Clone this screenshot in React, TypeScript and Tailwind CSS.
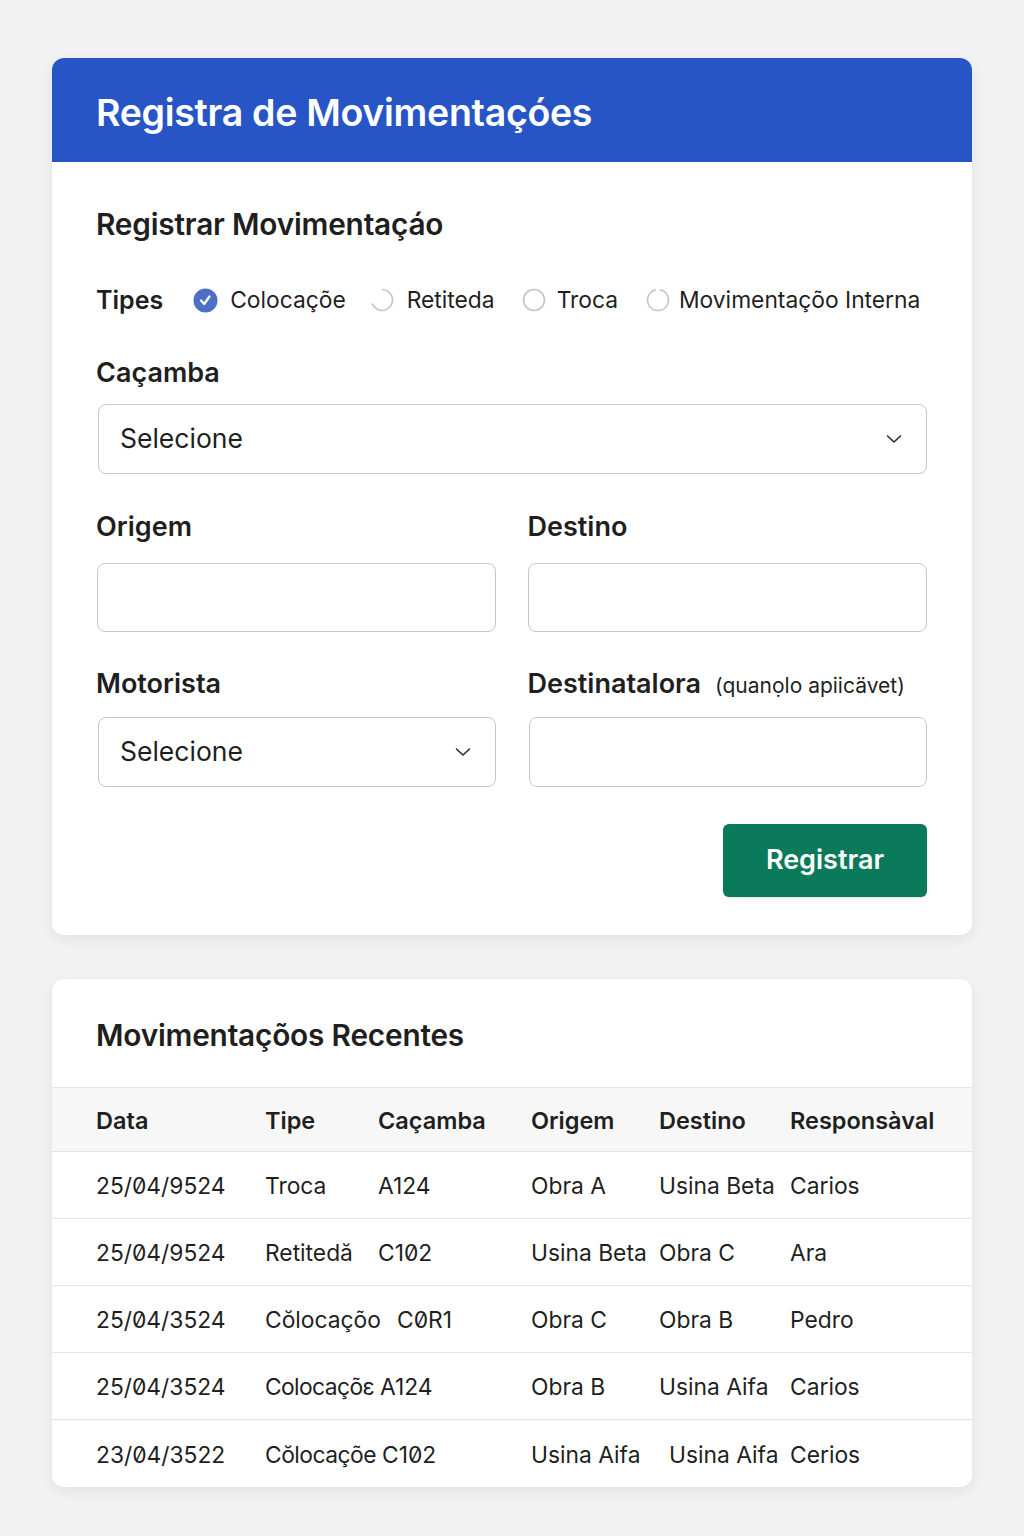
import React from "react";

const rows = [
  { data: "25/04/9524", tipe: "Troca", cacamba: "A124", origem: "Obra A", destino: "Usina Beta", resp: "Carios", tx: "", cx: "", dx: "" },
  { data: "25/04/9524", tipe: "Retitedă", cacamba: "C102", origem: "Usina Beta", destino: "Obra C", resp: "Ara", tx: "", cx: "", dx: "" },
  { data: "25/04/3524", tipe: "Cŏlocaçõo", cacamba: "C0R1", origem: "Obra C", destino: "Obra B", resp: "Pedro", tx: "", cx: "pl-[19px]", dx: "" },
  { data: "25/04/3524", tipe: "Colocaçõε", cacamba: "A124", origem: "Obra B", destino: "Usina Aifa", resp: "Carios", tx: "tracking-[-0.6px]", cx: "pl-[2px]", dx: "" },
  { data: "23/04/3522", tipe: "Cŏlocaçõe", cacamba: "C102", origem: "Usina Aifa", destino: "Usina Aifa", resp: "Cerios", tx: "tracking-[-0.5px]", cx: "pl-[4px]", dx: "pl-[10px]" },
];

function Chevron() {
  return (
    <svg width="16" height="10" viewBox="0 0 16 10" fill="none" stroke="#2a2a2a" strokeWidth="1.6" strokeLinecap="round" strokeLinejoin="round">
      <path d="M1.5 2 L8 8 L14.5 2" />
    </svg>
  );
}

function Radio({ kind }: { kind: "checked" | "open" | "broken" | "gap" }) {
  if (kind === "checked") {
    return (
      <svg width="25" height="25" viewBox="0 0 25 25">
        <circle cx="12.5" cy="12.5" r="12" fill="#4d6fc4" />
        <path d="M8 12.5 L11.2 16 L16.5 8.5" fill="none" stroke="#fff" strokeWidth="2.2" strokeLinecap="round" strokeLinejoin="round" />
      </svg>
    );
  }
  if (kind === "broken") {
    return (
      <svg width="24" height="24" viewBox="0 0 24 24" fill="none" stroke="#c4c4c4" strokeWidth="1.6">
        <path d="M12 1.5 A10.5 10.5 0 1 1 2.2 15.5" />
      </svg>
    );
  }
  if (kind === "gap") {
    return (
      <svg width="24" height="24" viewBox="0 0 24 24" fill="none" stroke="#c4c4c4" strokeWidth="1.6">
        <path d="M14 1.7 A10.5 10.5 0 1 1 10 1.7" />
      </svg>
    );
  }
  return (
    <svg width="24" height="24" viewBox="0 0 24 24" fill="none" stroke="#c4c4c4" strokeWidth="1.6">
      <circle cx="12" cy="12" r="10.5" />
    </svg>
  );
}

export default function App() {
  return (
    <div className="min-h-[1536px] bg-[#f2f2f2] px-[52px] pt-[58px] pb-[50px] font-['Inter','Noto_Sans',sans-serif] text-[#1f1f1f]">
      <div className="rounded-xl bg-white shadow-[0_4px_14px_rgba(0,0,0,0.07)]">
        <div className="flex h-[104px] items-center rounded-t-xl bg-[#2855c5] px-11 pt-[7px]">
          <h1 className="text-[37.5px] font-semibold tracking-[-0.3px] text-white">Registra de Movimentaçóes</h1>
        </div>

        <div className="flex flex-col pl-11 pr-[45px] pt-[44px] pb-[38px]">
          <h2 className="text-[29.8px] font-semibold leading-[36px] tracking-[-0.2px]">Registrar Movimentaçáo</h2>

          <div className="mt-[42px] flex h-8 items-center text-[22.8px] leading-8">
            <span className="mr-[30px] text-[25px] font-semibold">Tipes</span>
            <Radio kind="checked" />
            <span className="ml-[12px] mr-[24px]">Colocaçõe</span>
            <Radio kind="broken" />
            <span className="ml-[13px] mr-[27px]">Retiteda</span>
            <Radio kind="open" />
            <span className="ml-[11px] mr-[28px]">Troca</span>
            <Radio kind="gap" />
            <span className="ml-[9px]">Movimentaçõo Interna</span>
          </div>

          <label className="mt-[41px] h-8 text-[27px] font-semibold leading-8">Caçamba</label>
          <div className="mt-[15px] ml-0.5 flex h-[70px] items-center justify-between rounded-lg border border-[#c8c8cc] pl-[21px] pr-[24px]">
            <span className="text-[26.5px]">Selecione</span>
            <Chevron />
          </div>

          <div className="mt-[37px] grid grid-cols-2 gap-x-[32px]">
            <div className="flex flex-col">
              <label className="h-8 text-[27px] font-semibold leading-8">Origem</label>
              <div className="mt-[20px] ml-px h-[69px] rounded-lg border border-[#c8c8cc]" />
            </div>
            <div className="flex flex-col">
              <label className="h-8 text-[27px] font-semibold leading-8">Destino</label>
              <div className="mt-[20px] h-[69px] rounded-lg border border-[#c8c8cc]" />
            </div>

            <div className="mt-[36px] flex flex-col">
              <label className="h-8 text-[27px] font-semibold leading-8">Motorista</label>
              <div className="mt-[17px] ml-0.5 flex h-[70px] items-center justify-between rounded-lg border border-[#c8c8cc] pl-[21px] pr-[24px]">
                <span className="text-[26.5px]">Selecione</span>
                <Chevron />
              </div>
            </div>
            <div className="mt-[36px] flex flex-col">
              <label className="flex h-8 items-baseline leading-8">
                <span className="text-[27px] font-semibold">Destinatalora</span>
                <span className="ml-[14px] text-[21px]">(quanọlo apiicävet)</span>
              </label>
              <div className="mt-[17px] ml-px h-[70px] rounded-lg border border-[#c8c8cc]" />
            </div>
          </div>

          <button className="mt-[37px] h-[73px] w-[204px] self-end rounded-md bg-[#0b7a5a] text-[27px] font-semibold text-white shadow-sm">
            Registrar
          </button>
        </div>
      </div>

      <div className="mt-[44px] overflow-hidden rounded-xl bg-white shadow-[0_4px_14px_rgba(0,0,0,0.07)]">
        <h2 className="px-11 pt-[38px] pb-[34px] text-[29.8px] font-semibold leading-[36px] tracking-[-0.2px]">Movimentaçõos Recentes</h2>
        <div className="grid h-[65px] grid-cols-[169px_113px_153px_128px_131px_1fr] items-center whitespace-nowrap border-y border-[#e4e4e4] bg-[#f7f7f8] pl-11 pt-[2px] text-[23.5px] font-semibold">
          <span>Data</span>
          <span>Tipe</span>
          <span>Caçamba</span>
          <span>Origem</span>
          <span>Destino</span>
          <span>Responsàval</span>
        </div>
        {rows.map((r, i) => (
          <div
            key={i}
            className={`grid h-[67px] grid-cols-[169px_113px_153px_128px_131px_1fr] items-center whitespace-nowrap pl-11 pt-[3px] text-[22.8px] ${i < rows.length - 1 ? "border-b border-[#e4e4e4]" : ""}`}
          >
            <span className="[font-feature-settings:'zero']">{r.data}</span>
            <span className={r.tx}>{r.tipe}</span>
            <span className={`${r.cx} [font-feature-settings:'zero']`}>{r.cacamba}</span>
            <span>{r.origem}</span>
            <span className={r.dx}>{r.destino}</span>
            <span>{r.resp}</span>
          </div>
        ))}
      </div>
    </div>
  );
}
